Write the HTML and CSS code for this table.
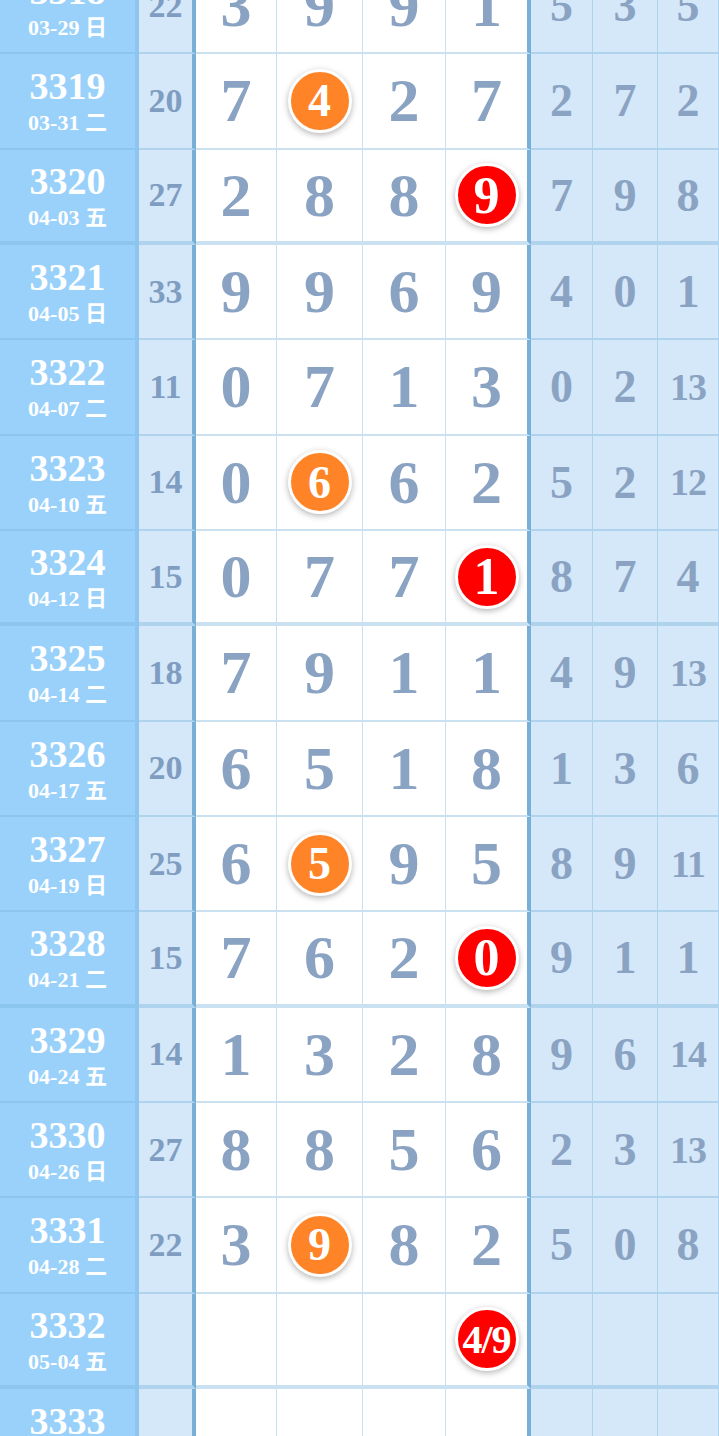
FILE: index.html
```html
<!DOCTYPE html>
<html lang="zh-CN">
<head>
  <meta charset="UTF-8" />
  <meta name="viewport" content="width=device-width, initial-scale=1" />
  <title>走势图</title>
  <link rel="stylesheet" href="styles.css">
</head>
<body>

  <div class="chart">

    <div class="row">
      <div class="cell issue"><span class="no">3318</span><span class="date">03-29 日</span></div>
      <div class="cell sum">22</div>
      <div class="cell num">3</div><div class="cell num">9</div><div class="cell num">9</div><div class="cell num end">1</div>
      <div class="cell side">5</div><div class="cell side">3</div><div class="cell side">5</div>
    </div>

    <div class="row">
      <div class="cell issue"><span class="no">3319</span><span class="date">03-31 二</span></div>
      <div class="cell sum">20</div>
      <div class="cell num">7</div><div class="cell num"><span class="ball orange">4</span></div><div class="cell num">2</div><div class="cell num end">7</div>
      <div class="cell side">2</div><div class="cell side">7</div><div class="cell side">2</div>
    </div>

    <div class="row sep">
      <div class="cell issue"><span class="no">3320</span><span class="date">04-03 五</span></div>
      <div class="cell sum">27</div>
      <div class="cell num">2</div><div class="cell num">8</div><div class="cell num">8</div><div class="cell num end"><span class="ball red">9</span></div>
      <div class="cell side">7</div><div class="cell side">9</div><div class="cell side">8</div>
    </div>

    <div class="row">
      <div class="cell issue"><span class="no">3321</span><span class="date">04-05 日</span></div>
      <div class="cell sum">33</div>
      <div class="cell num">9</div><div class="cell num">9</div><div class="cell num">6</div><div class="cell num end">9</div>
      <div class="cell side">4</div><div class="cell side">0</div><div class="cell side">1</div>
    </div>

    <div class="row">
      <div class="cell issue"><span class="no">3322</span><span class="date">04-07 二</span></div>
      <div class="cell sum">11</div>
      <div class="cell num">0</div><div class="cell num">7</div><div class="cell num">1</div><div class="cell num end">3</div>
      <div class="cell side">0</div><div class="cell side">2</div><div class="cell side two">13</div>
    </div>

    <div class="row">
      <div class="cell issue"><span class="no">3323</span><span class="date">04-10 五</span></div>
      <div class="cell sum">14</div>
      <div class="cell num">0</div><div class="cell num"><span class="ball orange">6</span></div><div class="cell num">6</div><div class="cell num end">2</div>
      <div class="cell side">5</div><div class="cell side">2</div><div class="cell side two">12</div>
    </div>

    <div class="row sep">
      <div class="cell issue"><span class="no">3324</span><span class="date">04-12 日</span></div>
      <div class="cell sum">15</div>
      <div class="cell num">0</div><div class="cell num">7</div><div class="cell num">7</div><div class="cell num end"><span class="ball red">1</span></div>
      <div class="cell side">8</div><div class="cell side">7</div><div class="cell side">4</div>
    </div>

    <div class="row">
      <div class="cell issue"><span class="no">3325</span><span class="date">04-14 二</span></div>
      <div class="cell sum">18</div>
      <div class="cell num">7</div><div class="cell num">9</div><div class="cell num">1</div><div class="cell num end">1</div>
      <div class="cell side">4</div><div class="cell side">9</div><div class="cell side two">13</div>
    </div>

    <div class="row">
      <div class="cell issue"><span class="no">3326</span><span class="date">04-17 五</span></div>
      <div class="cell sum">20</div>
      <div class="cell num">6</div><div class="cell num">5</div><div class="cell num">1</div><div class="cell num end">8</div>
      <div class="cell side">1</div><div class="cell side">3</div><div class="cell side">6</div>
    </div>

    <div class="row">
      <div class="cell issue"><span class="no">3327</span><span class="date">04-19 日</span></div>
      <div class="cell sum">25</div>
      <div class="cell num">6</div><div class="cell num"><span class="ball orange">5</span></div><div class="cell num">9</div><div class="cell num end">5</div>
      <div class="cell side">8</div><div class="cell side">9</div><div class="cell side two">11</div>
    </div>

    <div class="row sep">
      <div class="cell issue"><span class="no">3328</span><span class="date">04-21 二</span></div>
      <div class="cell sum">15</div>
      <div class="cell num">7</div><div class="cell num">6</div><div class="cell num">2</div><div class="cell num end"><span class="ball red">0</span></div>
      <div class="cell side">9</div><div class="cell side">1</div><div class="cell side">1</div>
    </div>

    <div class="row">
      <div class="cell issue"><span class="no">3329</span><span class="date">04-24 五</span></div>
      <div class="cell sum">14</div>
      <div class="cell num">1</div><div class="cell num">3</div><div class="cell num">2</div><div class="cell num end">8</div>
      <div class="cell side">9</div><div class="cell side">6</div><div class="cell side two">14</div>
    </div>

    <div class="row">
      <div class="cell issue"><span class="no">3330</span><span class="date">04-26 日</span></div>
      <div class="cell sum">27</div>
      <div class="cell num">8</div><div class="cell num">8</div><div class="cell num">5</div><div class="cell num end">6</div>
      <div class="cell side">2</div><div class="cell side">3</div><div class="cell side two">13</div>
    </div>

    <div class="row">
      <div class="cell issue"><span class="no">3331</span><span class="date">04-28 二</span></div>
      <div class="cell sum">22</div>
      <div class="cell num">3</div><div class="cell num"><span class="ball orange">9</span></div><div class="cell num">8</div><div class="cell num end">2</div>
      <div class="cell side">5</div><div class="cell side">0</div><div class="cell side">8</div>
    </div>

    <!-- next draw: forecast only -->
    <div class="row sep">
      <div class="cell issue"><span class="no">3332</span><span class="date">05-04 五</span></div>
      <div class="cell sum"></div>
      <div class="cell num"></div><div class="cell num"></div><div class="cell num"></div><div class="cell num end"><span class="ball red pair">4/9</span></div>
      <div class="cell side"></div><div class="cell side"></div><div class="cell side"></div>
    </div>

    <div class="row">
      <div class="cell issue"><span class="no">3333</span><span class="date">05-06 日</span></div>
      <div class="cell sum"></div>
      <div class="cell num"></div><div class="cell num"></div><div class="cell num"></div><div class="cell num end"></div>
      <div class="cell side"></div><div class="cell side"></div><div class="cell side"></div>
    </div>

  </div>

</body>
</html>
```

FILE: styles.css
```css
body {
  margin: 0;
  background: #fff;
  font-family: "Liberation Serif", "Noto Sans CJK SC", serif;
  overflow: hidden;
}
.chart {
  margin-top: -41px;
}
.row {
  display: grid;
  grid-template-columns: 139px 57px 81px 86px 83px 85px 62px 65px 61px;
  height: 95.33px;
}
.cell {
  box-sizing: border-box;
  display: flex;
  align-items: center;
  justify-content: center;
  border-bottom: 2px solid rgba(120, 180, 220, 0.4);
  border-right: 1px solid rgba(120, 180, 220, 0.4);
  font-weight: bold;
  color: #8aa3c3;
}
.row.sep .cell {
  border-bottom-width: 4px;
}

/* issue number + date */
.issue {
  flex-direction: column;
  background: #99d1fb;
  border-right-width: 4px;
  color: #fff;
}
.issue .no {
  font-size: 38px;
  line-height: 40px;
}
.issue .date {
  font-size: 22px;
  line-height: 24px;
  margin-top: 5px;
}

.sum {
  background: #d5e8f9;
  border-right: 4px solid #78afd6;
  font-size: 34px;
  color: #7f9dc1;
}

.num {
  font-size: 62px;
}
.num.end {
  border-right: 4px solid #78afd6;
}

.side {
  background: #d5e8f9;
  font-size: 46px;
}
.side.two {
  font-size: 38px;
  letter-spacing: -1px;
}

/* drawn balls */
.ball {
  width: 58px;
  height: 58px;
  border: 3px solid #fff;
  border-radius: 50%;
  display: flex;
  align-items: center;
  justify-content: center;
  color: #fff;
  font-size: 48px;
  box-shadow: 0 2px 6px rgba(0, 0, 0, 0.3);
}
.ball.orange {
  background: #ff8427;
  font-size: 46px;
}
.ball.red {
  background: #ff0000;
  font-size: 52px;
}
.ball.pair {
  font-size: 40px;
  letter-spacing: -1px;
}
```
